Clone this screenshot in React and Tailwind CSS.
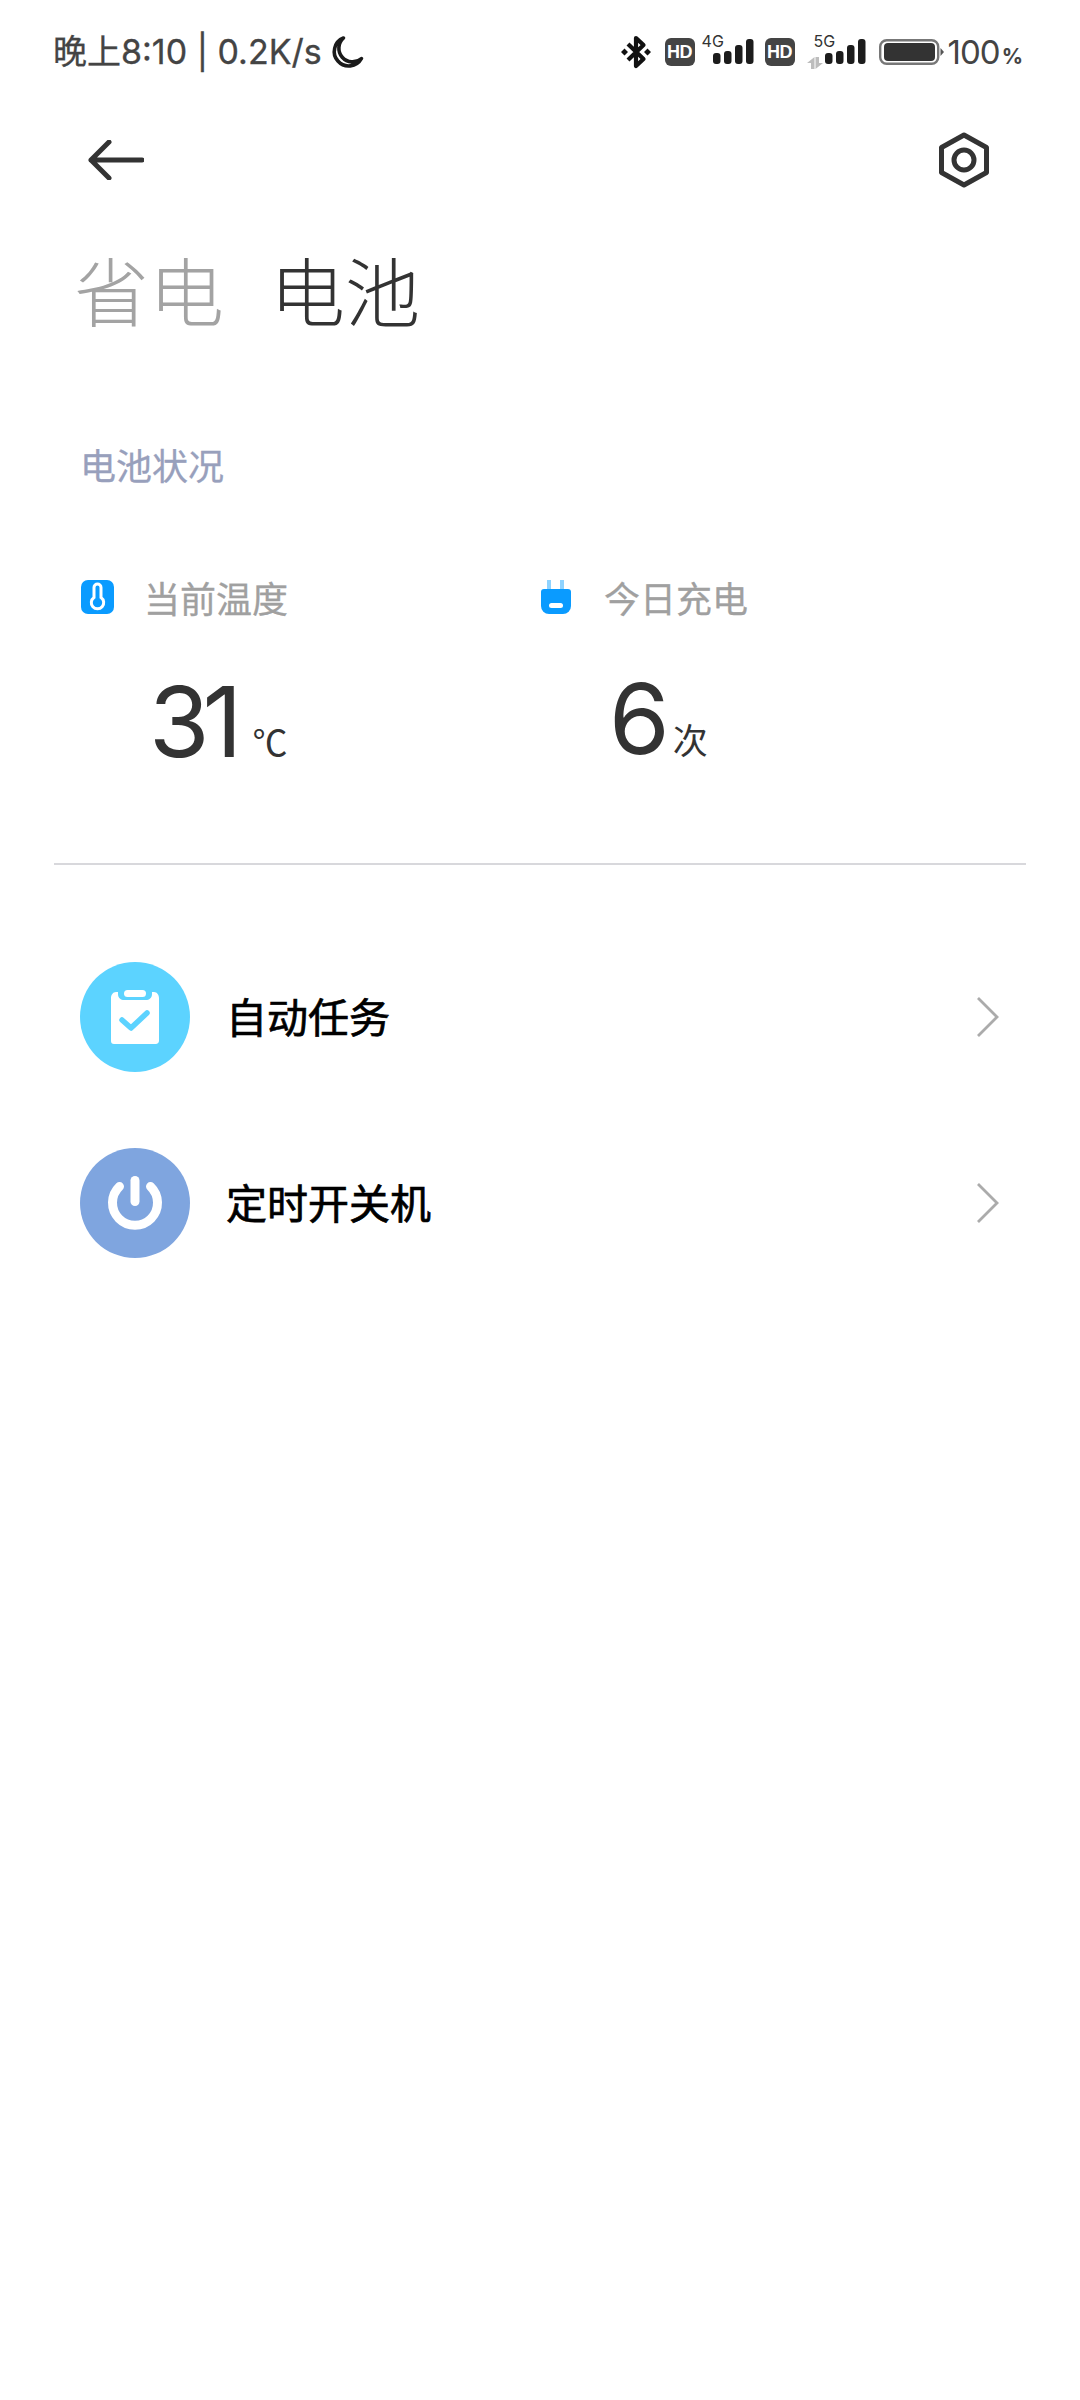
const cjk = 'font-["Noto_Sans_CJK_SC",sans-serif]';

function Moon() {
  return (
    <svg width="34" height="34" viewBox="0 0 34 34" fill="none" stroke="#1a1a1a" strokeWidth="3.6" strokeLinejoin="round">
      <path d="M13.5 3A14.5 14.5 0 1 0 31.5 23.5A13.5 13.5 0 0 1 13.5 3Z" />
    </svg>
  );
}

function Bluetooth() {
  return (
    <svg width="30" height="34" viewBox="0 0 30 34" fill="none">
      <path d="M7 9L22.5 24L15 31V3L22.5 10L7 25" stroke="#111" strokeWidth="4.2" strokeLinejoin="round" />
      <path d="M3.5 13.5L7 17L3.5 20.5L0 17ZM26.5 13.5L30 17L26.5 20.5L23 17Z" fill="#111" />
    </svg>
  );
}

function HdBadge() {
  return (
    <div className="flex h-[28px] w-[30px] items-center justify-center rounded-[6px] bg-[#444444] font-['Liberation_Sans',sans-serif] text-[18px] leading-none font-bold tracking-[-0.5px] text-white">
      HD
    </div>
  );
}

function SignalBars() {
  return (
    <svg width="41" height="25" viewBox="0 0 41 25" fill="#1c1c1c">
      <rect x="0" y="14" width="7.5" height="11" rx="3" />
      <rect x="11" y="12" width="7.5" height="13" rx="3" />
      <rect x="22" y="6" width="7.5" height="19" rx="3" />
      <rect x="33" y="0" width="7.5" height="25" rx="3" />
    </svg>
  );
}

function Signal({ label, arrows }) {
  return (
    <div className={arrows ? 'relative h-[28px] w-[59px]' : 'relative h-[28px] w-[52px]'}>
      <div className="absolute right-0 bottom-[2px]">
        <SignalBars />
      </div>
      <span
        className={
          arrows
            ? "absolute top-[-6px] left-[7px] font-['Inter',sans-serif] text-[16px] leading-[18px] text-[#333333]"
            : "absolute top-[-6px] left-0 font-['Inter',sans-serif] text-[16px] leading-[18px] text-[#333333]"
        }
      >
        {label}
      </span>
      {arrows && (
        <svg className="absolute bottom-[-3px] left-0" width="16" height="12" viewBox="0 0 16 12" fill="#bdbdbd">
          <path d="M7.5 0V12H4V6H0ZM8.5 12V0H12V6H16Z" />
        </svg>
      )}
    </div>
  );
}

function Battery() {
  return (
    <svg width="65" height="26" viewBox="0 0 65 26" fill="none">
      <rect x="1.2" y="1.2" width="58" height="23.6" rx="6.5" stroke="#777777" strokeWidth="2.4" />
      <rect x="5" y="4" width="51" height="18" rx="4" fill="#333333" />
      <path d="M61.5 9L65 13L61.5 17Z" fill="#555555" />
    </svg>
  );
}

function StatusBar() {
  return (
    <div className="flex h-[104px] items-center justify-between pr-[57px] pl-[53px] text-[#444444]">
      <div className="flex items-center">
        <span className={'text-[34px] leading-none whitespace-pre [-webkit-text-stroke:0.3px_#444444] font-["Inter","Noto_Sans_CJK_SC",sans-serif]'}>
          晚上8:10 | 0.2K/s
        </span>
        <div className="ml-[8px]">
          <Moon />
        </div>
      </div>
      <div className="flex items-center">
        <Bluetooth />
        <div className="ml-[14px]"><HdBadge /></div>
        <div className="ml-[7px]"><Signal label="4G" /></div>
        <div className="ml-[11px]"><HdBadge /></div>
        <div className="ml-[12px]"><Signal label="5G" arrows /></div>
        <div className="ml-[13px]"><Battery /></div>
        <span className="ml-[4px] flex items-baseline font-['Inter',sans-serif] text-[33px] leading-none tracking-[-1px] text-[#444444]">
          100<span className="ml-[2px] text-[21px] font-bold tracking-normal">%</span>
        </span>
      </div>
    </div>
  );
}

function Header() {
  return (
    <div className="flex h-[112px] items-center justify-between pr-[90px] pl-[88px]">
      <svg width="56" height="40" viewBox="0 0 56 40" fill="none" stroke="#333333" strokeWidth="5" strokeLinecap="round" strokeLinejoin="round">
        <path d="M54 20H3M21 2L3 20L21 38" />
      </svg>
      <svg width="52" height="56" viewBox="0 0 52 56" fill="none" stroke="#333333" strokeWidth="5" strokeLinejoin="round">
        <path d="M26 3L48.5 15.5V40.5L26 53L3.5 40.5V15.5Z" />
        <circle cx="26" cy="28" r="10" />
      </svg>
    </div>
  );
}

function Stat({ icon, label, value, unit, valueClass, unitClass }) {
  return (
    <div className="flex flex-col">
      <div className="mt-[3px] flex h-[36px] items-center">
        <div className="flex w-[63px] shrink-0">{icon}</div>
        <span className={'text-[36px] leading-none text-[#a0a0a0] [-webkit-text-stroke:0.3px_#a0a0a0] ' + cjk}>{label}</span>
      </div>
      <div className={valueClass}>
        <span className="font-['Inter',sans-serif] text-[98px] leading-[80px] font-normal tracking-[-7px] text-[#333333]">{value}</span>
        <span className={unitClass}>{unit}</span>
      </div>
    </div>
  );
}

function ThermoIcon() {
  return (
    <svg width="33" height="34" viewBox="0 0 33 34" fill="none">
      <rect width="33" height="34" rx="7" fill="#0a9bff" />
      <path d="M13 7.5A3.5 3.5 0 0 1 20 7.5V17.5A6.2 6.2 0 1 1 13 17.5Z" stroke="white" strokeWidth="3" />
    </svg>
  );
}

function PlugIcon() {
  return (
    <svg width="31" height="34" viewBox="0 0 31 34" fill="none">
      <rect x="6" y="0" width="4" height="10" fill="#8fd3ff" />
      <rect x="19" y="0" width="4" height="10" fill="#8fd3ff" />
      <path d="M0 12A3 3 0 0 1 3 9H27A3 3 0 0 1 30 12V26A8 8 0 0 1 22 34H8A8 8 0 0 1 0 26Z" fill="#0a9bff" />
      <rect x="8" y="23" width="14" height="5" rx="2.5" fill="white" />
    </svg>
  );
}

function ClipboardIcon() {
  return (
    <svg width="48" height="54" viewBox="0 0 48 54" fill="none">
      <path d="M5 2H7V4C7 8 10 10 13 10H35C38 10 41 8 41 4V2H43C46 2 48 5 48 8V51C48 53 46 54 45 54H3C1 54 0 53 0 51V8C0 5 2 2 5 2Z" fill="white" />
      <rect x="13" y="0" width="22" height="7" rx="3.5" fill="white" />
      <path d="M11 30L20 38L36 23" stroke="#5cd3ff" strokeWidth="5.5" strokeLinecap="round" strokeLinejoin="round" />
    </svg>
  );
}

function PowerIcon() {
  return (
    <svg width="56" height="56" viewBox="0 0 56 56" fill="none" stroke="white" strokeLinecap="round" strokeWidth="9">
      <path d="M12.5 11.5A22.5 22.5 0 1 0 43.5 11.5" />
      <path d="M28 5.5V26.5" />
    </svg>
  );
}

function Row({ icon, color, label }) {
  return (
    <div className="flex h-[110px] items-center">
      <div className={'flex h-[110px] w-[110px] shrink-0 items-center justify-center rounded-full ' + color}>{icon}</div>
      <span className={'mb-[4px] ml-[36px] flex-1 text-[41px] leading-none text-black [-webkit-text-stroke:0.7px_black] ' + cjk}>
        {label}
      </span>
      <svg width="24" height="42" viewBox="0 0 24 42" fill="none" stroke="#ababab" strokeWidth="2.8">
        <path d="M2 2L21 21L2 40" />
      </svg>
    </div>
  );
}

export default function App() {
  return (
    <div className="min-h-[2400px] w-full bg-white">
      <StatusBar />
      <Header />

      {/* 标题 */}
      <div className={'mt-[36px] flex pl-[74px] text-[75px] leading-[74px] font-light ' + cjk}>
        <span className="text-[#a3a3a3]">省电</span>
        <span className="ml-[46px] text-[#333333]">电池</span>
      </div>

      <div className={'mt-[120px] pl-[80px] text-[36px] leading-[36px] text-[#98a0bc] [-webkit-text-stroke:0.3px_#98a0bc] ' + cjk}>电池状况</div>

      <div className="mt-[94px] flex pl-[81px]">
        <div className="w-[460px]">
          <Stat
            icon={<ThermoIcon />}
            label="当前温度"
            value="31"
            unit="℃"
            valueClass="mt-[67px] flex items-end pl-[68px]"
            unitClass={'mb-[4px] ml-[17px] text-[35px] leading-[34px] text-[#333333] ' + cjk}
          />
        </div>
        <div>
          <Stat
            icon={<PlugIcon />}
            label="今日充电"
            value="6"
            unit="次"
            valueClass="mt-[64px] flex items-end pl-[68px]"
            unitClass={'mb-[3px] ml-[10px] text-[35px] leading-[34px] text-[#333333] ' + cjk}
          />
        </div>
      </div>

      <div className="mx-[54px] mt-[101px] h-[2px] bg-[#d8d8dc]" />

      <div className="mt-[97px] flex flex-col gap-[76px] pr-[80px] pl-[80px]">
        <Row icon={<ClipboardIcon />} color="bg-[#5cd3ff]" label="自动任务" />
        <Row icon={<PowerIcon />} color="bg-[#7fa5df]" label="定时开关机" />
      </div>
    </div>
  );
}
